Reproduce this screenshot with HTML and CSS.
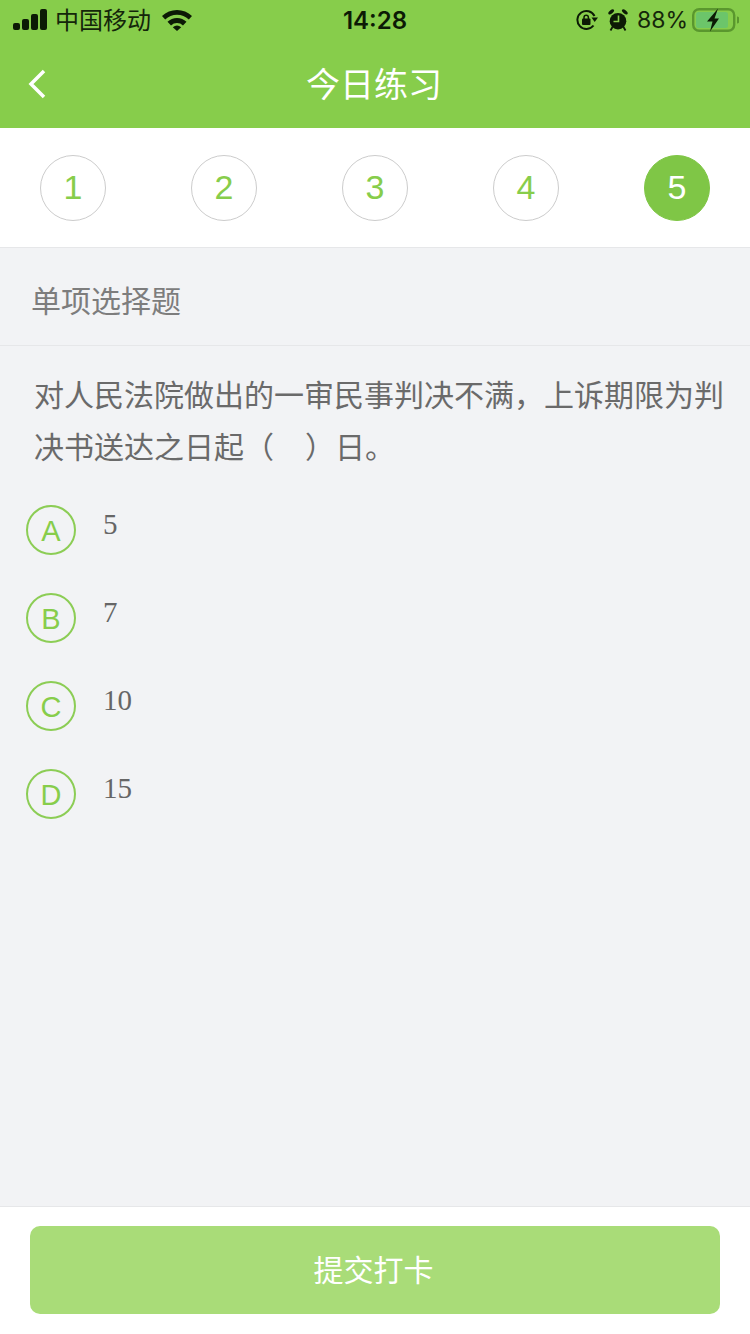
FILE: index.html
```html
<!DOCTYPE html>
<html>
<head>
    <meta charset="utf-8">
    <title>今日练习</title>
    <link rel="stylesheet" href="styles.css">
</head>
<body>
    <div class="page">
        <div class="statusbar">
            <div class="status-left">
                <svg class="signal" width="34" height="22" viewBox="0 0 34 22">
                    <rect x="0" y="14" width="7" height="7" rx="2"/>
                    <rect x="9" y="10" width="7" height="11" rx="2"/>
                    <rect x="18" y="5" width="7" height="16" rx="2"/>
                    <rect x="27" y="0" width="7" height="21" rx="2"/>
                </svg>
                <span class="carrier">中国移动</span>
                <svg class="wifi" width="30" height="22" viewBox="0 0 30 22">
                    <path d="M0 7 A21.500 21.500 0 0 1 30 7 L26.800 10.600 A17 17 0 0 0 3.200 10.600 Z"/>
                    <path d="M5.500 12.800 A13.500 13.500 0 0 1 24.500 12.800 L21 16.500 A8.500 8.500 0 0 0 9 16.500 Z"/>
                    <path d="M10.800 18.300 A6.500 6.500 0 0 1 19.200 18.300 L15 22 Z"/>
                </svg>
            </div>
            <div class="status-time">14:28</div>
            <div class="status-right">
                <svg class="lock" width="22" height="22" viewBox="0 0 22 22">
                    <path d="M17.500 16.500 A9 9 0 1 1 18.500 7" fill="none" stroke="#0c1a05" stroke-width="2"/>
                    <path d="M15.500 8.500 L22 8.500 L18.700 13 Z" fill="#0c1a05"/>
                    <rect x="6" y="9.500" width="8.500" height="6.500" rx="1" fill="#0c1a05"/>
                    <path d="M8 10 V8.500 a2.200 2.200 0 0 1 4.400 0 V10" fill="none" stroke="#0c1a05" stroke-width="1.500"/>
                </svg>
                <svg class="alarm" width="20" height="22" viewBox="0 0 20 22">
                    <circle cx="10" cy="12.200" r="8.300" fill="#0c1a05"/>
                    <ellipse cx="3.200" cy="2.800" rx="3.400" ry="1.700" transform="rotate(-38 3.200 2.800)" fill="#0c1a05"/>
                    <ellipse cx="16.800" cy="2.800" rx="3.400" ry="1.700" transform="rotate(38 16.800 2.800)" fill="#0c1a05"/>
                    <path d="M4.500 18 L2.500 21.500 M15.500 18 L17.500 21.500" stroke="#0c1a05" stroke-width="1.800"/>
                    <path d="M10.500 6.500 V12.500 H5.500" fill="none" stroke="#87cd4b" stroke-width="1.600"/>
                </svg>
                <span class="percent">88%</span>
                <svg class="battery" width="47" height="24" viewBox="0 0 47 24">
                    <rect x="1.200" y="1.200" width="41" height="21.600" rx="6" fill="none" stroke="#5a972e" stroke-width="2.400"/>
                    <rect x="4" y="4" width="32" height="16" rx="2.500" fill="#6cc56a"/>
                    <path d="M45 8.500 a2.500 3.500 0 0 1 0 7 Z" fill="#5a972e"/>
                    <path d="M26 0.500 L15 13.500 H20.500 L18 23.500 L27 10.500 H22.500 Z" fill="#0c1a05"/>
                </svg>
            </div>
        </div>

        <div class="navbar">
            <svg class="back" width="22" height="34" viewBox="0 0 22 34">
                <path d="M18 4 L5 17 L18 30" fill="none" stroke="#fff" stroke-width="3.500"/>
            </svg>
            <h1 class="nav-title">今日练习</h1>
        </div>

        <div class="steps">
            <div class="step">1</div>
            <div class="step">2</div>
            <div class="step">3</div>
            <div class="step">4</div>
            <div class="step step-active">5</div>
        </div>

        <div class="section-title">单项选择题</div>

        <div class="question">
            <p class="question-text">对人民法院做出的一审民事判决不满，上诉期限为判决书送达之日起（&nbsp;&nbsp;&nbsp;&thinsp;）日。</p>
            <div class="option"><span class="option-key">A</span><span class="option-text">5</span></div>
            <div class="option"><span class="option-key">B</span><span class="option-text">7</span></div>
            <div class="option"><span class="option-key">C</span><span class="option-text">10</span></div>
            <div class="option"><span class="option-key">D</span><span class="option-text">15</span></div>
        </div>

        <div class="footer">
            <button class="submit">提交打卡</button>
        </div>
    </div>
</body>
</html>
```

FILE: styles.css
```css
body {
    margin: 0;
    font-family: "Liberation Sans", "Noto Sans CJK SC", sans-serif;
    background-color: #f2f3f5;
}

.page {
    width: 750px;
    height: 1334px;
    display: flex;
    flex-direction: column;
    overflow: hidden;
}

.statusbar {
    height: 40px;
    background-color: #87cd4b;
    display: flex;
    align-items: center;
    justify-content: space-between;
    padding: 0 11px 0 13px;
    color: #0c1a05;
    position: relative;
}

.status-left,
.status-right {
    display: flex;
    align-items: center;
}

.carrier {
    font-size: 24px;
    margin-left: 8px;
    line-height: 40px;
    padding-top: 2px;
    color: #14260a;
}

.wifi {
    margin-left: 11px;
    fill: #0c1a05;
}

.signal {
    fill: #0c1a05;
}

.status-time {
    position: absolute;
    left: 0;
    right: 0;
    text-align: center;
    font-size: 24px;
    font-weight: 600;
    font-family: "Inter", "Liberation Sans", sans-serif;
    color: #0c1a05;
}

.alarm {
    margin-left: 10px;
}

.percent {
    font-size: 23px;
    margin-left: 9px;
    font-family: "Inter", "Liberation Sans", sans-serif;
    color: #14260a;
}

.battery {
    margin-left: 4px;
}

.navbar {
    height: 88px;
    box-sizing: border-box;
    padding: 0 2px 4px 0;
    background-color: #87cd4b;
    display: flex;
    align-items: center;
    justify-content: center;
    position: relative;
}

.back {
    position: absolute;
    left: 26px;
    top: 27px;
}

.nav-title {
    margin: 0;
    font-size: 34px;
    font-weight: normal;
    color: #fff;
}

.steps {
    height: 119px;
    background-color: #fff;
    border-bottom: 1px solid #e6e7e9;
    display: flex;
    align-items: center;
    justify-content: space-between;
    padding: 0 40px;
}

.step {
    width: 66px;
    height: 66px;
    box-sizing: border-box;
    border: 1px solid #ccc;
    border-radius: 50%;
    display: flex;
    align-items: center;
    justify-content: center;
    font-size: 34px;
    color: #87cd4b;
}

.step-active {
    background-color: #7fc646;
    border-color: #7fc646;
    color: #fff;
}

.section-title {
    height: 98px;
    box-sizing: border-box;
    border-bottom: 1px solid #e6e7e9;
    padding: 4px 31px 0;
    display: flex;
    align-items: center;
    font-size: 30px;
    color: #7d7d7d;
}

.question {
    flex: 1;
    padding: 24px 26px 0;
}

.question-text {
    margin: 0 0 31px;
    padding-left: 8px;
    font-size: 30px;
    line-height: 52px;
    color: #6a6a6a;
}

.option {
    height: 88px;
    display: flex;
    align-items: flex-start;
}

.option-key {
    width: 50px;
    height: 50px;
    box-sizing: border-box;
    padding-top: 2px;
    border: 2px solid #8ccd55;
    border-radius: 50%;
    display: flex;
    align-items: center;
    justify-content: center;
    font-size: 29px;
    color: #87cd4b;
}

.option-text {
    margin-left: 27px;
    font-family: "Liberation Serif", serif;
    font-size: 29px;
    line-height: 38px;
    color: #666;
}

.footer {
    height: 128px;
    box-sizing: border-box;
    background-color: #fff;
    border-top: 1px solid #e6e7e9;
    padding: 19px 30px 0;
}

.submit {
    display: block;
    width: 690px;
    height: 88px;
    padding: 0 3px 4px 0;
    border: none;
    border-radius: 10px;
    background-color: #a9dc78;
    color: #fff;
    font-family: "Liberation Sans", "Noto Sans CJK SC", sans-serif;
    font-size: 30px;
}
```
